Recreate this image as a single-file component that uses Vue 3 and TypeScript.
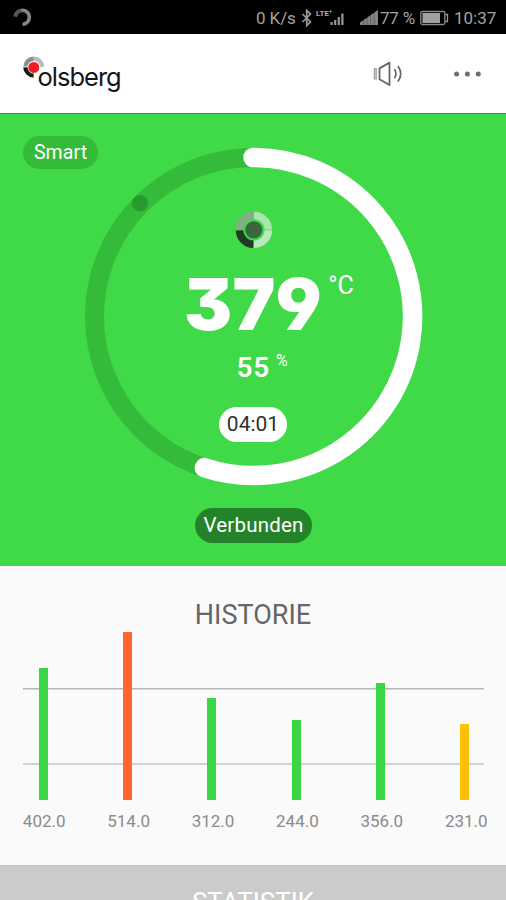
<script setup lang="ts">
interface Reading {
  value: number
  color: string
}

const temperature = 379
const airFlow = 55
const scale = 0.3275

const readings: Reading[] = [
  { value: 402, color: '#3ad643' },
  { value: 514, color: '#ff672f' },
  { value: 312, color: '#3ad643' },
  { value: 244, color: '#3ad643' },
  { value: 356, color: '#3ad643' },
  { value: 231, color: '#ffc107' },
]
</script>

<template>
  <div class="app">
    <div class="status">
      <svg class="status-ring" width="20" height="20" viewBox="0 0 20 20">
        <path d="M3.4 8.5 A7 7 0 1 1 10.5 16.2" fill="none" stroke="#858585" stroke-width="3.6" />
        <path d="M3.2 8.2 A7 7 0 0 1 9.5 2.8" fill="none" stroke="#555" stroke-width="3.6" />
      </svg>
      <div class="status-right">
        <span class="speed">0 K/s</span>
        <svg class="status-icons" width="80" height="24" viewBox="0 0 80 24">
          <path d="M2.5 8 L10.5 16 L6.7 19.5 V4.5 L10.5 8 L2.5 16" fill="none" stroke="#999" stroke-width="1.7" />
          <text x="16" y="9.6" class="lte">LTE⁺</text>
          <g fill="#999">
            <rect x="30.5" y="16" width="2.2" height="3" />
            <rect x="34.1" y="14" width="2.2" height="5" />
            <rect x="37.7" y="11" width="2.2" height="8" />
            <rect x="41.3" y="7.5" width="2.2" height="11.5" />
          </g>
          <path d="M60 19 V16.5 L78 4 V19 Z" fill="#858585" />
          <path d="M63.5 5V19 M67 5V19 M70.6 5V19 M74.2 5V19" stroke="#000" stroke-opacity=".35" stroke-width=".8" />
        </svg>
        <span class="percent">77 %</span>
        <svg class="battery" width="29" height="16" viewBox="0 0 29 16">
          <rect x=".8" y="1.5" width="24" height="13" rx="1.5" fill="none" stroke="#888" stroke-width="1.3" />
          <rect x="2.5" y="3" width="17.5" height="10" fill="#a0a0a0" />
          <path d="M25.2 4.5 H27.5 V11.5 H25.2" fill="none" stroke="#999" stroke-width="1.3" />
        </svg>
        <span class="clock">10:37</span>
      </div>
    </div>

    <header class="header">
      <div class="logo">
        <svg class="logo-mark" width="24" height="26" viewBox="0 0 24 26">
          <path d="M3.6 12.5 A8.2 8.2 0 0 1 11.8 4.7" fill="none" stroke="#8c8f92" stroke-width="4.6" />
          <path d="M11.8 4.7 A8.2 8.2 0 0 1 20 12.9" fill="none" stroke="#b9bbbd" stroke-width="4.6" />
          <path d="M3.6 13.4 A8.2 8.2 0 0 0 11.6 21.2" fill="none" stroke="#161616" stroke-width="4.8" />
          <circle cx="11.8" cy="13.4" r="6.4" fill="#fff" fill-opacity=".7" />
          <circle cx="11.8" cy="13.4" r="5.5" fill="#ee1c22" />
        </svg>
        <span class="logo-name">olsberg</span>
      </div>
      <div class="actions">
        <svg width="32" height="28" viewBox="0 0 32 28" fill="none" stroke="#666">
          <rect x="1.3" y="8.6" width="2" height="10.4" fill="#ccc" stroke="#999" stroke-width="1" />
          <path d="M6.5 8.4 L16.5 2.6 V25 L6.5 19.2 Z" stroke-width="1.8" stroke-linejoin="round" />
          <path d="M21.4 9.2 Q24.6 13.8 21.4 18.2" stroke-width="1.7" />
          <path d="M25 6 Q30.4 13.8 25 21.6" stroke-width="1.7" />
        </svg>
        <svg width="28" height="6" viewBox="0 0 28 6" fill="#6d6d6d">
          <circle cx="2.6" cy="3" r="2.5" />
          <circle cx="13.4" cy="3" r="2.5" />
          <circle cx="24.3" cy="3" r="2.5" />
        </svg>
      </div>
    </header>

    <main class="stove">
      <div class="mode">Smart</div>
      <div class="gauge">
        <svg class="ring" width="339" height="339" viewBox="-.5 -.5 339 339">
          <circle cx="169" cy="169" r="159" fill="none" stroke="#35bb3a" stroke-width="19" />
          <path d="M168.5 10 A159 159 0 1 1 119.9 320.2" fill="none" stroke="#fff" stroke-width="19.6" stroke-linecap="round" />
          <circle cx="55.5" cy="55.8" r="8.2" fill="#279b2f" />
        </svg>
        <div class="readout">
          <svg class="emblem" width="38" height="38" viewBox="0 0 38 38">
            <g fill="none" stroke-width="7.5">
              <path d="M4.5 18.5 A14.3 14.3 0 0 1 18.5 4.5" stroke="#85ae88" />
              <path d="M19.1 4.5 A14.3 14.3 0 0 1 33.4 18.6" stroke="#a9e6ae" />
              <path d="M33.4 19.2 A14.3 14.3 0 0 1 19.1 33.3" stroke="#b8eabb" />
              <path d="M18.3 33.3 A14.3 14.3 0 0 1 4.5 19.3" stroke="#213c25" />
            </g>
            <circle cx="18.8" cy="18.8" r="9.8" fill="#40da48" />
            <circle cx="18.8" cy="18.8" r="8.6" fill="#3b6642" />
          </svg>
          <div class="temp">
            <span class="temp-value">{{ temperature }}</span>
            <span class="temp-unit">°C</span>
          </div>
          <div class="flow">
            <span class="flow-value">{{ airFlow }}</span>
            <span class="flow-unit">%</span>
          </div>
          <div class="timer">04:01</div>
        </div>
      </div>
      <div class="connection">Verbunden</div>
    </main>

    <section class="history">
      <h2 class="title">HISTORIE</h2>
      <div class="chart">
        <div v-for="(r, i) in readings" :key="i" class="column">
          <div class="bar" :style="{ height: r.value * scale + 'px', background: r.color }"></div>
        </div>
      </div>
      <div class="labels">
        <span v-for="(r, i) in readings" :key="i" class="label">{{ r.value.toFixed(1) }}</span>
      </div>
    </section>

    <footer class="statistics">STATISTIK</footer>
  </div>
</template>

<style>
body {
  background: #cbcbcb;
  overflow: hidden;
}
</style>

<style scoped>
.app {
  width: 506px;
  height: 900px;
  overflow: hidden;
  display: flex;
  flex-direction: column;
  background: #fafafa;
  font-family: Roboto, sans-serif;
}
.app > * {
  flex-shrink: 0;
}
.status {
  height: 34px;
  box-sizing: border-box;
  background: #000;
  display: flex;
  justify-content: space-between;
  align-items: center;
  padding: 2px 11px 0 12px;
  color: #a3a3a3;
  font-size: 17px;
  line-height: 20px;
}
.status-right {
  display: flex;
  align-items: center;
  height: 36px;
  white-space: nowrap;
}
.speed {
  width: 44px;
  letter-spacing: -0.1px;
}
.lte {
  font: 700 8px Roboto, sans-serif;
  fill: #aaa;
}
.percent {
  width: 38px;
  margin-right: 2px;
  letter-spacing: -0.2px;
}
.battery {
  margin-right: 5px;
}
.clock {
  width: 41px;
}
.header {
  height: 79px;
  box-sizing: border-box;
  background: #fff;
  display: flex;
  justify-content: space-between;
  padding: 0 24px 0 22px;
}
.logo {
  display: flex;
  padding-top: 20px;
}
.logo-name {
  margin: 9px 0 0 -8.5px;
  font: 25.5px/28px Inter, sans-serif;
  letter-spacing: -1px;
  color: #161616;
}
.actions {
  display: flex;
  align-items: center;
  gap: 49px;
}
.stove {
  height: 453px;
  box-sizing: border-box;
  background: #40da48;
  border-top: 1px solid #1fa52b;
  display: flex;
  flex-direction: column;
  align-items: center;
  color: #fff;
}
.mode {
  align-self: flex-start;
  margin: 22px 0 -22px 23px;
  width: 75px;
  height: 33px;
  border-radius: 17px;
  background: #34bb3a;
  font-size: 19.5px;
  line-height: 33px;
  text-align: center;
  letter-spacing: 0.1px;
}
.gauge {
  display: grid;
  width: 339px;
  height: 339px;
  margin-left: 1px;
}
.ring,
.readout {
  grid-area: 1 / 1;
}
.readout {
  display: flex;
  flex-direction: column;
  align-items: center;
  padding-top: 64px;
}
.temp {
  display: flex;
  width: 137px;
  height: 88px;
  padding-top: 18px;
  box-sizing: border-box;
}
.temp-value {
  margin-left: -1px;
  font: 900 72px/74px Inter, sans-serif;
  font-feature-settings: "cv09", "cv04";
  letter-spacing: 0.3px;
}
.temp-unit {
  font-size: 25px;
  line-height: 29px;
  margin: 4px 0 0 6px;
  white-space: nowrap;
}
.flow {
  display: flex;
  width: 34px;
  height: 32px;
  margin-top: 14px;
}
.flow-value {
  font: 600 28px/34px Roboto, sans-serif;
  letter-spacing: 0.8px;
}
.flow-unit {
  font-size: 16px;
  line-height: 20px;
  margin-left: 6px;
}
.timer {
  width: 68px;
  height: 35px;
  margin: 24px 1px 0 0;
  border-radius: 18px;
  background: #fff;
  color: #303030;
  font-size: 21px;
  line-height: 35px;
  text-align: center;
}
.connection {
  width: 117px;
  height: 35px;
  margin: 22px 0 0 1px;
  border-radius: 18px;
  background: #24822b;
  font-size: 20.5px;
  line-height: 35px;
  text-align: center;
  letter-spacing: 0.2px;
}
.history {
  height: 299px;
  display: flex;
  flex-direction: column;
}
.title {
  margin: 34px 0 0;
  text-align: center;
  font-size: 27px;
  font-weight: 400;
  line-height: 31px;
  color: #666;
}
.chart {
  height: 169px;
  margin: 0 22px 0 23px;
  display: flex;
  background:
    linear-gradient(#b8b8b8, #b8b8b8) 0 57px / 100% 1.5px no-repeat,
    linear-gradient(#d2d2d2, #d2d2d2) 0 132px / 100% 2px no-repeat;
  justify-content: space-between;
  padding: 0 15px 0 16px;
}
.column {
  width: 9px;
  display: flex;
  align-items: flex-end;
}
.bar {
  width: 9px;
}
.labels {
  display: flex;
  width: 506.4px;
  margin: 10px 0 0 2px;
}
.label {
  flex: 1;
  text-align: center;
  font-size: 17px;
  line-height: 22px;
  color: #8b8b8b;
}
.statistics {
  flex: 1;
  background: #cbcbcb;
  color: #fff;
  text-align: center;
  font-size: 26px;
  line-height: 30px;
  padding-top: 22px;
}
</style>
